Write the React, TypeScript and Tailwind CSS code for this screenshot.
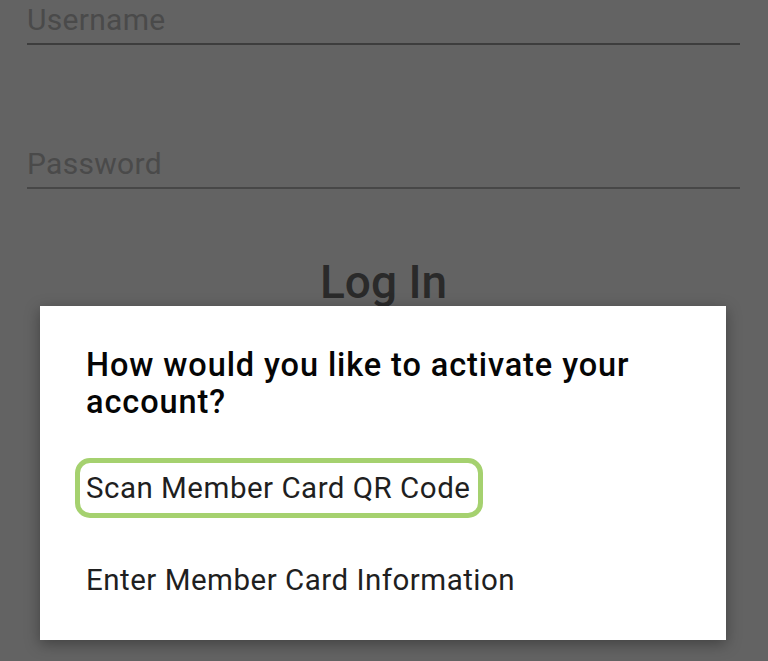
import React from "react";

export default function App() {
  return (
    <div
      className="relative w-[768px] h-[661px] overflow-hidden bg-[#636363]"
      style={{ fontFamily: "Roboto, 'Noto Sans', sans-serif" }}
    >
      <div className="pl-[27px] pr-[28px]">
        <div className="pt-[2px]">
          <div className="text-[30px] leading-[36px] tracking-[0.3px] text-[#4a4a4a]">Username</div>
          <div className="mt-[5px] h-[2px] bg-[#3d3d3d]" />
        </div>
        <div className="mt-[101px]">
          <div className="text-[30px] leading-[36px] tracking-[0.3px] text-[#4a4a4a]">Password</div>
          <div className="mt-[5px] h-[2px] bg-[#474747]" />
        </div>
        <div className="mt-[67px] flex justify-center">
          <div className="text-[46px] leading-[52px] font-medium text-[#2a2a2a]">Log In</div>
        </div>
      </div>

      <div className="absolute left-[40px] top-[306px] w-[686px] h-[334px] bg-white shadow-[0_4px_14px_rgba(0,0,0,0.35)] pl-[35px] pr-[30px] pt-[41px]">
        <div className="pl-[11px] text-[32.5px] leading-[37px] font-medium text-[#050505] tracking-[0.9px]">
          How would you like to activate your account?
        </div>
        <div className="mt-[37px] flex">
          <div className="border-[5px] border-[#a5d16f] rounded-[15px] pl-[6px] pr-[8px] text-[29.5px] leading-[50px] tracking-[0.5px] text-[#1f1f1f]">
            Scan Member Card QR Code
          </div>
        </div>
        <div className="mt-[32px] flex">
          <div className="border-[5px] border-transparent pl-[6px] pr-[8px] text-[29.5px] leading-[50px] tracking-[0.5px] text-[#1f1f1f]">
            Enter Member Card Information
          </div>
        </div>
      </div>
    </div>
  );
}
